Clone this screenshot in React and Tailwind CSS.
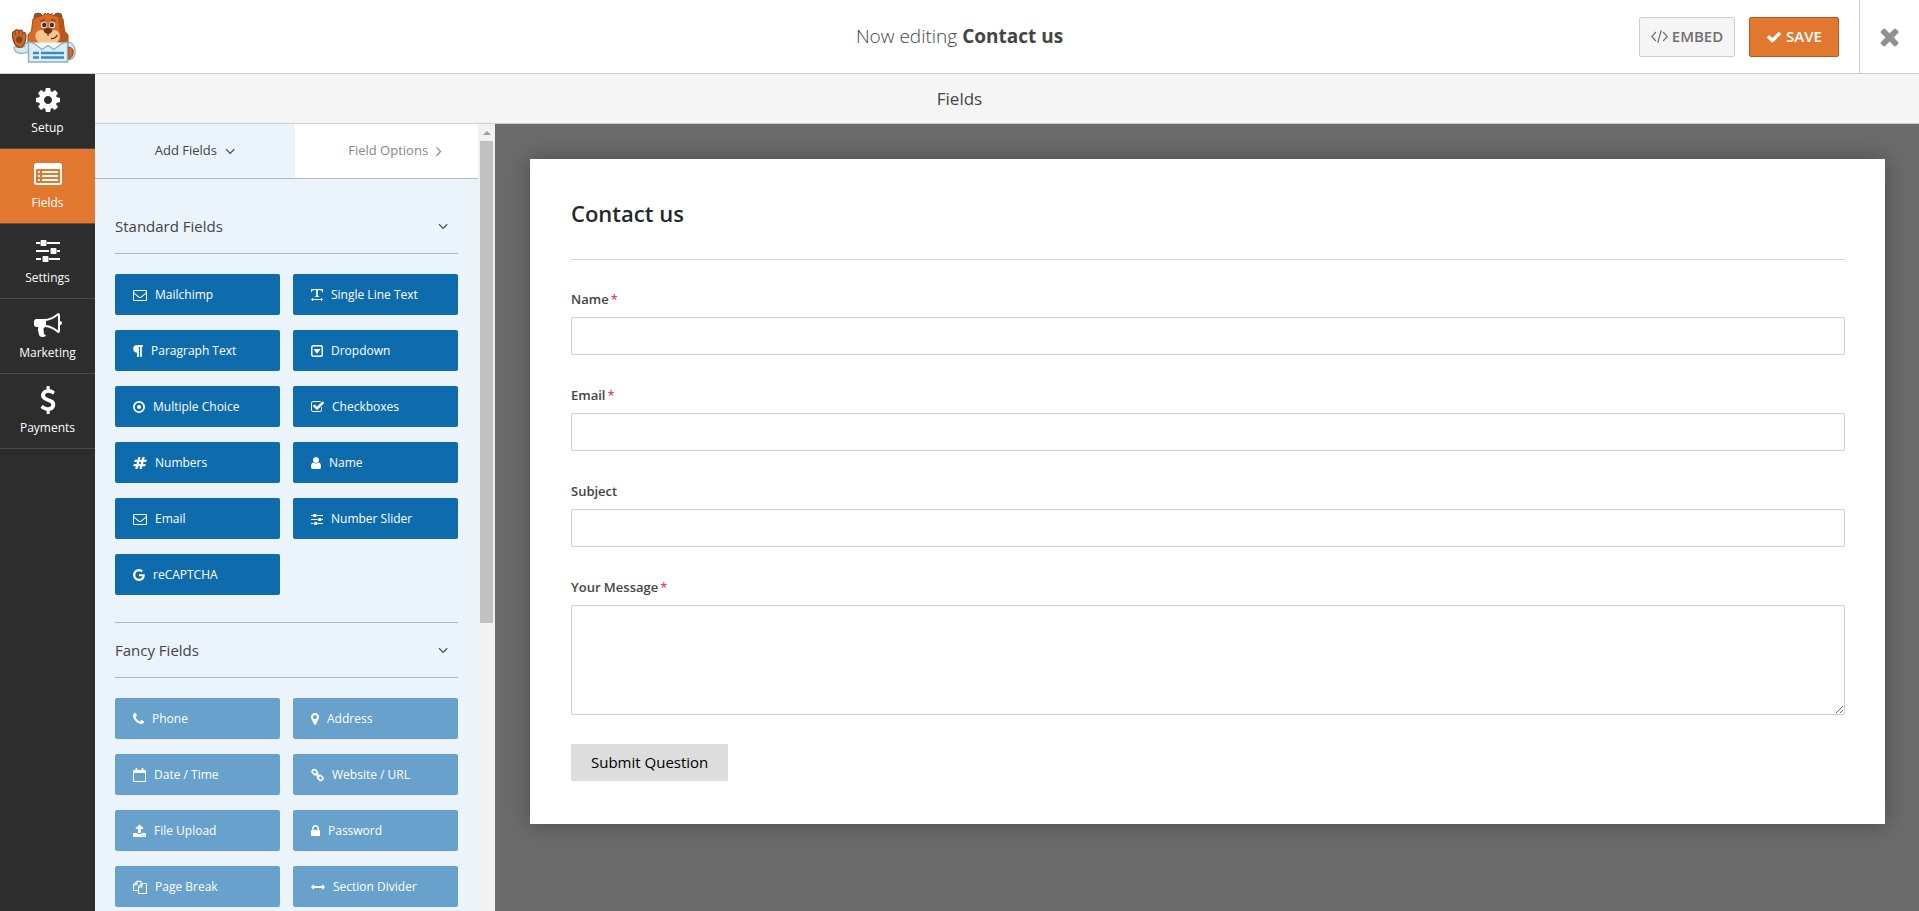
import React, { useState } from "react";

// Icons share a 1792 unit em square, narrower ones are cropped around the centre
const Icon = ({ name, size = 14 }) => {
  const { w, draw } = icons[name];
  return (
    <svg
      width={(w * size) / 1792}
      height={size}
      viewBox={`${(1792 - w) / 2} 0 ${w} 1792`}
      fill="currentColor"
      className="shrink-0"
      aria-hidden="true"
    >
      {draw}
    </svg>
  );
};

const icons = {
  cog: {
    w: 1536,
    draw: <path d="M1152 896q0-106-75-181t-181-75-181 75-75 181 75 181 181 75 181-75 75-181zm512-109v222q0 12-8 23t-20 13l-185 28q-19 54-39 91 35 50 107 138 10 12 10 25t-9 23q-27 37-99 108t-94 71q-12 0-26-9l-138-108q-44 23-91 38-16 136-29 186-7 28-36 28h-222q-14 0-24.5-8.5t-11.5-21.5l-28-184q-49-16-90-37l-141 107q-10 9-25 9-14 0-25-11-126-114-165-168-7-10-7-23 0-12 8-23 15-21 51-66.5t54-70.5q-27-50-41-99l-183-27q-13-2-21-12.5t-8-23.5v-222q0-12 8-23t19-13l186-28q14-46 39-92-40-57-107-138-10-12-10-24 0-10 9-23 26-36 98.5-107.5t94.5-71.5q13 0 26 10l138 107q44-23 91-38 16-136 29-186 7-28 36-28h222q14 0 24.5 8.5t11.5 21.5l28 184q49 16 90 37l142-107q9-9 24-9 13 0 25 10 129 119 165 170 7 8 7 22 0 12-8 23-15 21-51 66.5t-54 70.5q26 50 41 98l183 28q13 2 21 12.5t8 23.5z" />,
  },
  list: {
    w: 1792,
    draw: (
      <>
        <path fillRule="evenodd" d="M160 128h1472q66 0 113 47t47 113v1088q0 66-47 113t-113 47h-1472q-66 0-113-47t-47-113v-1088q0-66 47-113t113-47zm0 384q-32 0-32 32v832q0 32 32 32h1472q32 0 32-32v-832q0-32-32-32z" />
        <rect x="256" y="640" width="128" height="128" rx="32" />
        <rect x="256" y="896" width="128" height="128" rx="32" />
        <rect x="256" y="1152" width="128" height="128" rx="32" />
        <rect x="512" y="640" width="1024" height="128" rx="32" />
        <rect x="512" y="896" width="1024" height="128" rx="32" />
        <rect x="512" y="1152" width="1024" height="128" rx="32" />
      </>
    ),
  },
  sliders: {
    w: 1536,
    draw: (
      <>
        <path d="M128 384h256v128h-256zM832 384h832v128h-832zM128 896h832v128h-832zM1472 896h192v128h-192zM128 1408h320v128h-320zM960 1408h704v128h-704z" />
        <rect x="416" y="256" width="384" height="384" rx="64" />
        <rect x="1056" y="768" width="384" height="384" rx="64" />
        <rect x="544" y="1280" width="384" height="384" rx="64" />
      </>
    ),
  },
  bullhorn: {
    w: 1792,
    draw: <path d="M1664 640q53 0 90.5 37.5t37.5 90.5-37.5 90.5-90.5 37.5v384q0 52-38 90t-90 38q-417-347-812-380-58 19-91 66t-31 100.5 40 92.5q-20 33-23 65.5t6 58 33.5 55 48 50 61.5 50.5q-29 58-111.5 83t-168.5 11.5-132-55.5q-7-23-29.5-87.5t-32-94.5-23-89-15-101 3.5-98.5 22-110.5h-122q-66 0-113-47t-47-113v-192q0-66 47-113t113-47h480q435 0 896-384 52 0 90 38t38 90v384zm-128 604v-954q-394 302-768 343v270q377 42 768 341z" />,
  },
  dollar: {
    w: 1024,
    draw: <path d="M1362 1185q0 153-99.5 263.5t-258.5 136.5v175q0 14-9 23t-23 9h-135q-13 0-22.5-9.5t-9.5-22.5v-175q-66-9-127.5-31t-101.5-44.5-74-48-46.5-37.5-17.5-18q-17-21-2-41l103-135q7-10 23-12 15-2 24 9l2 2q113 99 243 125 37 8 74 8 81 0 142.5-43t61.5-122q0-28-15-53t-33.5-42-58.5-37.5-66-32-80-32.5q-39-16-61.5-25t-61.5-26.5-62.5-31-56.5-35.5-53.5-42.5-43.5-49-35.5-58-21-66.5-8.5-78q0-138 98-242t255-134v-180q0-13 9.5-22.5t22.5-9.5h135q14 0 23 9t9 23v176q57 6 110.5 23t87 33.5 63.5 37.5 39 29 15 14q17 18 5 38l-81 146q-8 15-23 16-14 3-27-7-3-3-14.5-12t-39-26.5-58.5-32-74.5-26-85.5-11.5q-95 0-155 43t-60 111q0 26 8.5 48t29.5 41.5 39.5 33 56 31 60.5 27 70 27.5q53 20 81 31.5t76 35 75.5 42.5 62 50 53 63.5 31.5 76.5 13 94z" />,
  },
  envelope: {
    w: 1792,
    draw: <path d="M1664 1504v-768q-32 36-69 66-268 206-426 338-51 43-83 67t-86.500 48.500-102.500 24.500h-2q-48 0-102.500-24.500t-86.500-48.500-83-67q-158-132-426-338-37-30-69-66v768q0 13 9.500 22.500t22.500 9.500h1472q13 0 22.500-9.500t9.500-22.500zm0-1051v-24.500l-.5-13-3-12.500-5.500-9-9-7.500-14-2.500h-1472q-13 0-22.500 9.500t-9.500 22.500q0 168 147 284 193 152 401 317 6 5 35 29.500t46 37.500 44.500 31.500 50.500 27.500 43 9h2q20 0 43-9t50.500-27.500 44.500-31.500 46-37.500 35-29.500q208-165 401-317 54-43 100.500-115.500t46.500-131.500zm128-37v1088q0 66-47 113t-113 47h-1472q-66 0-113-47t-47-113v-1088q0-66 47-113t113-47h1472q66 0 113 47t47 113z" />,
  },
  textWidth: {
    w: 1536,
    draw: (
      <>
        <path d="M140 128h1512v420h-100q-30-200-110-260-60-30-430-30v740q0 70 180 90v70h-592v-70q180-20 180-90v-740q-370 0-430 30-80 60-110 260h-100z" />
        <path d="M128 1472l260-224v160h1016v-160l260 224-260 224v-160h-1016v160z" />
      </>
    ),
  },
  paragraph: {
    w: 1280,
    draw: <path d="M1534 189v73q0 29-18.500 61t-42.500 32q-50 0-54 1-26 6-32 31-3 11-3 64v1152q0 25-18 43t-43 18h-108q-25 0-43-18t-18-43v-1218h-143v1218q0 25-17.500 43t-43.500 18h-108q-26 0-43.500-18t-17.500-43v-496q-147-12-245-59-126-58-192-179-64-117-64-259 0-166 88-286 88-118 209-159 111-37 417-37h479q25 0 43 18t18 43z" />,
  },
  caretSquare: {
    w: 1536,
    draw: (
      <>
        <rect x="224" y="224" width="1344" height="1344" rx="192" fill="none" stroke="currentColor" strokeWidth="192" />
        <path d="M544 640h704q42 0 57 36 15 34-9 65l-352 448q-20 27-48 27t-48-27l-352-448q-24-31-9-65 15-36 57-36z" />
      </>
    ),
  },
  dotCircle: {
    w: 1536,
    draw: (
      <>
        <circle cx="896" cy="896" r="656" fill="none" stroke="currentColor" strokeWidth="224" />
        <circle cx="896" cy="896" r="256" />
      </>
    ),
  },
  checkSquare: {
    w: 1664,
    draw: <path d="M1472 930v318q0 119-84.500 203.500t-203.500 84.500h-832q-119 0-203.500-84.500t-84.500-203.500v-832q0-119 84.500-203.500t203.500-84.500h832q63 0 117 25 15 7 18 23 3 17-9 29l-49 49q-10 10-23 10-3 0-9-2-23-6-45-6h-832q-66 0-113 47t-47 113v832q0 66 47 113t113 47h832q66 0 113-47t47-113v-254q0-13 9-22l64-64q10-10 23-10 6 0 12 3 20 8 20 29zm231-489l-814 814q-24 24-57 24t-57-24l-430-430q-24-24-24-57t24-57l110-110q24-24 57-24t57 24l263 263 647-647q24-24 57-24t57 24l110 110q24 24 24 57t-24 57z" />,
  },
  hashtag: {
    w: 1792,
    draw: <path d="M991 1024l64-256h-254l-64 256h254zm768-504l-56 224q-7 24-31 24h-327l-64 256h311q15 0 25 12 10 14 6 28l-56 224q-5 24-31 24h-327l-81 328q-7 24-31 24h-224q-16 0-26-12-9-12-6-28l78-312h-254l-81 328q-7 24-31 24h-225q-15 0-25-12-9-12-6-28l78-312h-311q-15 0-25-12-9-12-6-28l56-224q7-24 31-24h327l64-256h-311q-15 0-25-12-10-14-6-28l56-224q5-24 31-24h327l81-328q7-24 32-24h224q15 0 25 12 9 12 6 28l-78 312h254l81-328q7-24 32-24h224q15 0 25 12 9 12 6 28l-78 312h311q15 0 25 12 9 12 6 28z" />,
  },
  user: {
    w: 1280,
    draw: <path d="M1536 1399q0 109-62.500 187t-150.500 78h-854q-88 0-150.500-78t-62.500-187q0-85 8.500-160.500t31.500-152 58.500-131 94-89 134.500-34.500q131 128 313 128t313-128q76 0 134.500 34.500t94 89 58.500 131 31.500 152 8.500 160.500zm-256-887q0 159-112.500 271.500t-271.500 112.500-271.500-112.500-112.500-271.500 112.500-271.500 271.500-112.500 271.500 112.500 112.500 271.500z" />,
  },
  google: {
    w: 1536,
    draw: <path d="M896 786h725q12 67 12 128 0 217-91 387.500t-259.500 266.500-386.500 96q-157 0-299-60.500t-245-163.500-163.500-245-60.500-299 60.500-299 163.500-245 245-163.500 299-60.500q300 0 515 201l-209 201q-123-119-306-119-129 0-238.500 65t-173.500 176.500-64 243.500 64 243.500 173.500 176.500 238.500 65q87 0 160-24t120-60 82-82 51.500-87 22.500-78h-436v-264z" />,
  },
  phone: {
    w: 1408,
    draw: <path d="M1600 1240q0 27-10 70.500t-21 68.500q-21 50-122 106-94 51-186 51-27 0-53-3.500t-57.500-12.500-47-14.500-55.500-20.500-49-18q-98-35-175-83-127-79-264-216t-216-264q-48-77-83-175-3-9-18-49t-20.500-55.500-14.500-47-12.500-57.500-3.500-53q0-92 51-186 56-101 106-122 25-11 68.500-21t70.500-10q14 0 21 3 18 6 53 76 11 19 30 54t35 63.500 31 53.500q3 4 17.500 25t21.500 35.500 7 28.500q0 20-28.500 50t-62 55-62 53-28.500 46q0 9 5 22.500t8.500 20.500 14 24 11.500 19q76 137 174 235t235 174q2 1 19 11.500t24 14 20.500 8.500 22.500 5q18 0 46-28.500t53-62 55-62 50-28.500q14 0 28.500 7t35.500 21.500 25 17.500q25 15 53.500 31t63.500 35 54 30q70 35 76 53 3 7 3 21z" />,
  },
  marker: {
    w: 1024,
    draw: <path d="M1152 640q0-106-75-181t-181-75-181 75-75 181 75 181 181 75 181-75 75-181zm256 0q0 109-33 179l-364 774q-16 33-47.500 52t-67.500 19-67.500-19-46.500-52l-365-774q-33-70-33-179 0-212 150-362t362-150 362 150 150 362z" />,
  },
  calendar: {
    w: 1664,
    draw: (
      <>
        <path fillRule="evenodd" d="M192 256h1408q52 0 90 38t38 90v1280q0 52-38 90t-90 38h-1408q-52 0-90-38t-38-90v-1280q0-52 38-90t90-38zm0 384v1024h1408v-1024z" />
        <rect x="384" y="0" width="256" height="480" rx="128" />
        <rect x="1152" y="0" width="256" height="480" rx="128" />
      </>
    ),
  },
  link: {
    w: 1664,
    draw: (
      <g fill="none" stroke="currentColor" strokeWidth="210">
        <rect x="190" y="290" width="720" height="500" rx="240" transform="rotate(45 550 540)" />
        <rect x="882" y="1002" width="720" height="500" rx="240" transform="rotate(45 1242 1252)" />
        <path d="M700 700l400 400" strokeLinecap="round" />
      </g>
    ),
  },
  upload: {
    w: 1664,
    draw: <path d="M1344 1472q0-26-19-45t-45-19-45 19-19 45 19 45 45 19 45-19 19-45zm256 0q0-26-19-45t-45-19-45 19-19 45 19 45 45 19 45-19 19-45zm128-224v320q0 40-28 68t-68 28h-1472q-40 0-68-28t-28-68v-320q0-40 28-68t68-28h427q21 56 70.500 92t110.500 36h256q61 0 110.500-36t70.500-92h427q40 0 68 28t28 68zm-325-648q-17 40-59 40h-256v448q0 26-19 45t-45 19h-256q-26 0-45-19t-19-45v-448h-256q-42 0-59-40-17-39 14-69l448-448q18-19 45-19t45 19l448 448q31 30 14 69z" />,
  },
  lock: {
    w: 1152,
    draw: <path d="M640 768h512v-192q0-106-75-181t-181-75-181 75-75 181v192zm832 96v576q0 40-28 68t-68 28h-960q-40 0-68-28t-28-68v-576q0-40 28-68t68-28h32v-192q0-184 132-316t316-132 316 132 132 316v192h32q40 0 68 28t28 68z" />,
  },
  files: {
    w: 1792,
    draw: (
      <g fill="none" stroke="currentColor" strokeWidth="140" strokeLinejoin="round">
        <path d="M704 1340h-634v-730l440-440h510v300" />
        <path d="M510 170v440h-440" />
        <path d="M704 890l440-440h578v1270h-1018z" />
        <path d="M1144 450v440h-440" />
      </g>
    ),
  },
  arrows: {
    w: 1792,
    draw: <path d="M1792 896q0 26-19 45l-256 256q-19 19-45 19t-45-19-19-45v-128h-1024v128q0 26-19 45t-45 19-45-19l-256-256q-19-19-19-45t19-45l256-256q19-19 45-19t45 19 19 45v128h1024v-128q0-26 19-45t45-19 45 19l256 256q19 19 19 45z" />,
  },
  angleDown: {
    w: 1152,
    draw: <path d="M1395 736q0 13-10 23l-466 466q-10 10-23 10t-23-10l-466-466q-10-10-10-23t10-23l50-50q10-10 23-10t23 10l393 393 393-393q10-10 23-10t23 10l50 50q10 10 10 23z" />,
  },
  angleRight: {
    w: 640,
    draw: <path d="M1171 960q0 13-10 23l-466 466q-10 10-23 10t-23-10l-50-50q-10-10-10-23t10-23l393-393-393-393q-10-10-10-23t10-23l50-50q10-10 23-10t23 10l466 466q10 10 10 23z" />,
  },
  check: {
    w: 1792,
    draw: <path d="M1671 566q0 40-28 68l-724 724-136 136q-28 28-68 28t-68-28l-136-136-362-362q-28-28-28-68t28-68l136-136q28-28 68-28t68 28l294 295 656-657q28-28 68-28t68 28l136 136q28 28 28 68z" />,
  },
  close: {
    w: 1408,
    draw: <path d="M1490 1322q0 40-28 68l-136 136q-28 28-68 28t-68-28l-294-294-294 294q-28 28-68 28t-68-28l-136-136q-28-28-28-68t28-68l294-294-294-294q-28-28-28-68t28-68l136-136q28-28 68-28t68 28l294 294 294-294q28-28 68-28t68 28l136 136q28 28 28 68t-28 68l-294 294 294 294q28 28 28 68z" />,
  },
  code: {
    w: 1792,
    draw: (
      <path
        d="M520 420l-440 476 440 476M1272 420l440 476-440 476M1080 240l-368 1312"
        fill="none"
        stroke="currentColor"
        strokeWidth="125"
      />
    ),
  },
};

const Logo = () => (
  <svg width="66" height="52" viewBox="0 0 66 52" aria-label="WPForms" role="img">
    {/* waving arm */}
    <path d="M3 36c0 6 6 8 15 5V31c-2 0-4 2-5 5z" fill="#d5e8ef" stroke="#8db0bc" strokeWidth="1.2" />
    <path d="M1.500 23c0-2 1-3 2.500-2.500 0-2 3-2 4-.5 1-1.500 3.500-1 3.500 1 2 0 3.500 1 3.500 3.500 0 5-1.500 9-4 11.500-3 1-5.500 0-7-3-2-3-2.500-6-2.500-10z" fill="#c9692c" stroke="#8a4419" strokeWidth="1.2" />
    <path d="M5 28c0-3 5-4 6-1 1 3-1 5-2.500 5S5 31 5 28z" fill="#86431b" />
    <path d="M4.500 21.500v2.500M8 20.500v3M11.500 21.500v2.500" stroke="#8a4419" strokeWidth="1" />
    {/* arm holding the sheet */}
    <path d="M57 31c6 1 8 7 7 12-1 4-4 6-8 6z" fill="#d5e8ef" stroke="#8db0bc" strokeWidth="1.2" />
    <path d="M57 36c4 0 6 3 5 7-1 3-3 5-5 5z" fill="#cf6a2c" stroke="#8a4419" strokeWidth="1" />
    {/* head */}
    <circle cx="27" cy="6" r="4" fill="#a94d1d" stroke="#8a4419" />
    <circle cx="47" cy="6" r="4" fill="#a94d1d" stroke="#8a4419" />
    <path d="M22 8c3-2 7-3 10-3.500L34 2l1.500 1.500L37 2l2 2 2-1.500.5 2c4 0 7 1.500 10.500 3.500l1.500 12 3.500 4v8l-5 5H22l-5-5v-8l3.500-4z" fill="#d96b27" stroke="#994b1c" />
    <path d="M47 6.500l5 1.500 1.500 12 3.500 4v8l-5 4h-9l7-8-2-12z" fill="#b9541c" />
    <path d="M29.500 19c-4 1-6 4-5 8 2 5 7 7 12.500 7s10.500-2 11.500-7c1-4-1-7-4.500-8z" fill="#f7c48b" />
    <circle cx="33" cy="14" r="3.200" fill="#efd9c6" />
    <circle cx="41" cy="14" r="3.200" fill="#efd9c6" />
    <circle cx="33.300" cy="14" r="2.200" fill="#33313a" />
    <circle cx="40.800" cy="14" r="2.200" fill="#33313a" />
    <path d="M29.500 10.500c1.500-1.500 3-2 4.500-1.500M40 9c2-.5 3.500 0 4.500 1.500" stroke="#7a3a14" strokeWidth="1.300" fill="none" />
    <path d="M32.500 18.500c2-2 7-2 9 0 0 3-3 4.500-4.500 4.500s-4.500-1.500-4.500-4.500z" fill="#69351c" />
    <path d="M37 22v3M40 27.500c3 .5 5-1 6.500-3.500" stroke="#7a3a14" strokeWidth="1.300" fill="none" />
    {/* shirt and sheet */}
    <path d="M17.500 31l19.500 4 19.500-4v20h-39z" fill="#dcedf3" stroke="#8db0bc" strokeWidth="1.400" />
    <path d="M22 31.500l9 7 6-4 6 4 9-7" fill="#f4fafc" stroke="#8db0bc" strokeWidth="1.200" />
    <path d="M22 42h6M30 42h23M22 46.500h6M30 46.500h23" stroke="#3a8ac8" strokeWidth="2.400" />
  </svg>
);

const navItems = [
  { label: "Setup", icon: "cog" },
  { label: "Fields", icon: "list" },
  { label: "Settings", icon: "sliders" },
  { label: "Marketing", icon: "bullhorn" },
  { label: "Payments", icon: "dollar" },
];

const fieldGroups = [
  {
    title: "Standard Fields",
    fields: [
      { label: "Mailchimp", icon: "envelope" },
      { label: "Single Line Text", icon: "textWidth" },
      { label: "Paragraph Text", icon: "paragraph" },
      { label: "Dropdown", icon: "caretSquare" },
      { label: "Multiple Choice", icon: "dotCircle" },
      { label: "Checkboxes", icon: "checkSquare" },
      { label: "Numbers", icon: "hashtag" },
      { label: "Name", icon: "user" },
      { label: "Email", icon: "envelope" },
      { label: "Number Slider", icon: "sliders" },
      { label: "reCAPTCHA", icon: "google" },
    ],
  },
  {
    title: "Fancy Fields",
    locked: true,
    fields: [
      { label: "Phone", icon: "phone" },
      { label: "Address", icon: "marker" },
      { label: "Date / Time", icon: "calendar" },
      { label: "Website / URL", icon: "link" },
      { label: "File Upload", icon: "upload" },
      { label: "Password", icon: "lock" },
      { label: "Page Break", icon: "files" },
      { label: "Section Divider", icon: "arrows" },
    ],
  },
];

const formFields = [
  { id: "name", label: "Name", required: true },
  { id: "email", label: "Email", required: true },
  { id: "subject", label: "Subject" },
  { id: "message", label: "Your Message", required: true, multiline: true },
];

const Header = () => (
  <header className="grid h-[74px] shrink-0 grid-cols-[1fr_auto_1fr] items-center border-b border-[#cdcdcd] bg-white">
    <div className="pl-[11px]">
      <Logo />
    </div>
    <h1 className="text-[19px] font-light text-[#444]">
      Now editing <span className="font-bold">Contact us</span>
    </h1>
    <div className="flex h-full items-center justify-end">
      <button type="button" className="flex h-10 w-24 items-center justify-center gap-1 rounded-xs border border-[#cdcdcd] bg-[#f5f5f5] text-[15px] font-semibold text-[#6f6f6f]">
        <Icon name="code" size={17} />
        EMBED
      </button>
      <button type="button" className="mr-5 ml-3.5 flex h-10 w-[90px] items-center justify-center gap-1 rounded-xs border border-[#b85a1b] bg-[#e27730] text-[15px] font-semibold text-white">
        <Icon name="check" size={16} />
        SAVE
      </button>
      <button type="button" aria-label="Close" className="flex h-full w-[60px] items-center justify-center border-l border-[#cdcdcd] text-[#909090]">
        <Icon name="close" size={27} />
      </button>
    </div>
  </header>
);

const Sidebar = ({ active, onSelect }) => (
  <nav className="w-[95px] shrink-0 bg-[#2d2d2d]">
    {navItems.map((item) => (
      <button
        key={item.label}
        type="button"
        onClick={() => onSelect(item.label)}
        className={`flex h-[75px] w-full flex-col items-center gap-1 border-b pt-3 text-xs leading-5 text-white ${
          active === item.label ? "border-[#7c4a28] bg-[#e27730]" : "border-[#4a4a4a]"
        }`}
      >
        <Icon name={item.icon} size={28} />
        {item.label}
      </button>
    ))}
  </nav>
);

const FieldGroup = ({ group, first }) => (
  <section className={first ? "" : "mt-[27px] border-t border-[#b0b6c2]"}>
    <h2 className="flex h-[55px] items-center justify-between border-b border-[#b0b6c2] pr-2.5 text-[15px] text-[#444]">
      {group.title}
      <Icon name="angleDown" size={16} />
    </h2>
    <div className="mt-5 grid grid-cols-2 gap-x-[13px] gap-y-[15px]">
      {group.fields.map((field) => (
        <button
          key={field.label}
          type="button"
          className={`flex h-[41px] items-center gap-2 rounded-xs pl-[18px] text-xs text-white ${
            group.locked ? "bg-[#68a1cc]" : "bg-[#0e6cad]"
          }`}
        >
          <Icon name={field.icon} />
          {field.label}
        </button>
      ))}
    </div>
  </section>
);

const FieldPanel = () => (
  <aside className="flex w-[400px] shrink-0 overflow-hidden bg-[#ebf3fb]">
    <div className="min-w-0 flex-1">
      <div className="flex overflow-hidden border-b border-[#b0b6c2] text-[13px]">
        <button type="button" className="flex h-[54px] w-[200px] shrink-0 items-center justify-center gap-2 text-[#444]">
          Add Fields
          <Icon name="angleDown" size={16} />
        </button>
        <button type="button" className="flex h-[54px] w-[200px] shrink-0 items-center justify-center gap-2 bg-white text-[#86898c]">
          Field Options
          <Icon name="angleRight" size={16} />
        </button>
      </div>
      <div className="p-5">
        {fieldGroups.map((group, index) => (
          <FieldGroup key={group.title} group={group} first={index === 0} />
        ))}
      </div>
    </div>
    {/* Scrollbar */}
    <div className="flex w-[17px] shrink-0 flex-col items-center bg-[#f1f1f1]">
      <div className="flex h-[17px] items-center">
        <svg width="8" height="4" viewBox="0 0 8 4" fill="#a0a0a0" aria-hidden="true">
          <path d="M4 0l4 4H0z" />
        </svg>
      </div>
      <div className="h-[482px] w-[13px] bg-[#c1c1c1]" />
    </div>
  </aside>
);

const inputClass = "block w-full rounded-xs border border-[#ccc] bg-white px-2.5 text-sm";

const FormPreview = () => (
  <main className="min-w-0 flex-1 bg-[#6b6b6b] pt-[35px] pr-[34px] pl-[35px]">
    <form
      className="bg-white pt-9 pr-10 pb-[43px] pl-[41px] shadow-[0_0_20px_rgba(0,0,0,0.3)]"
      onSubmit={(e) => e.preventDefault()}
    >
      <h2 className="border-b border-[#d5d5d5] pb-7 text-[22px] leading-9 font-semibold text-[#23282c]">Contact us</h2>
      <div className="mt-[29px] space-y-[30px]">
        {formFields.map((field) => (
          <div key={field.id}>
            <label htmlFor={field.id} className="mb-2 block text-[13px] leading-5 font-semibold text-[#444]">
              {field.label}
              {field.required && <span className="ml-0.5 font-normal text-[#e0243a]">*</span>}
            </label>
            {field.multiline ? (
              <textarea id={field.id} className={`${inputClass} h-[110px] resize`} />
            ) : (
              <input id={field.id} type="text" className={`${inputClass} h-[38px]`} />
            )}
          </div>
        ))}
      </div>
      <button type="submit" className="mt-[29px] h-[37px] bg-[#ddd] px-5 text-[15px] text-black">
        Submit Question
      </button>
    </form>
  </main>
);

const App = () => {
  const [active, setActive] = useState("Fields");

  return (
    <div className="flex h-screen flex-col overflow-hidden font-['Open_Sans',sans-serif]">
      <Header />
      <div className="flex min-h-0 flex-1">
        <Sidebar active={active} onSelect={setActive} />
        <div className="flex min-w-0 flex-1 flex-col">
          <div className="flex h-[50px] shrink-0 items-center justify-center border-b border-[#cdcdcd] bg-[#f5f5f5] pr-[95px] text-[17px] text-[#444]">
            {active}
          </div>
          <div className="flex min-h-0 flex-1">
            <FieldPanel />
            <FormPreview />
          </div>
        </div>
      </div>
    </div>
  );
};

export default App;
